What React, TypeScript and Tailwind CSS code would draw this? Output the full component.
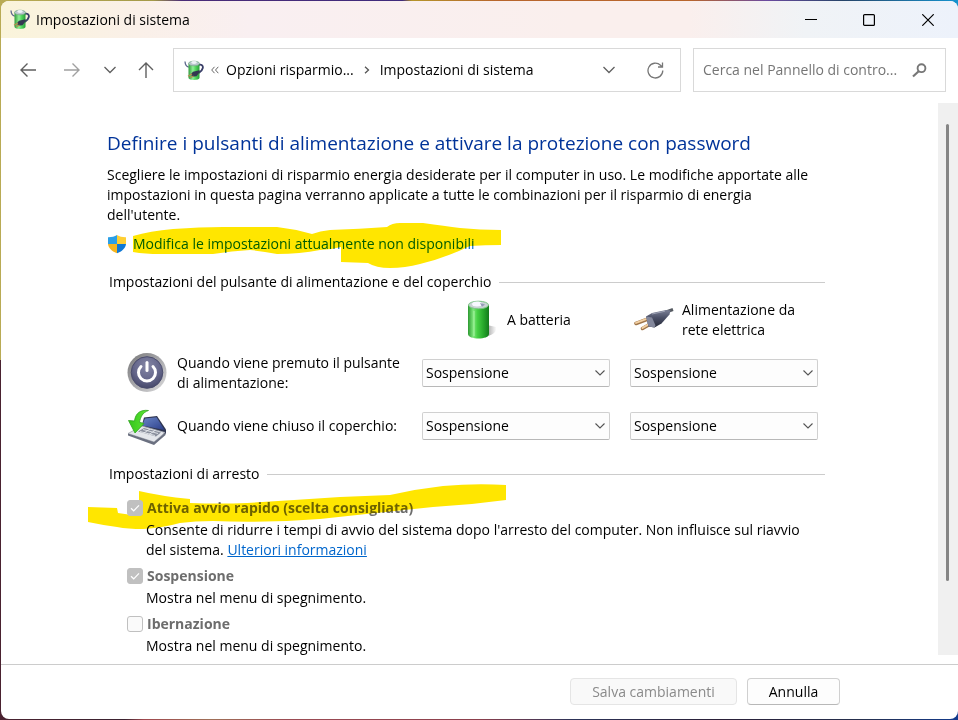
import { useState } from "react";
import type { ReactNode } from "react";

function PowerOptionsIcon() {
  return (
    <svg width="20" height="21" viewBox="0 0 20 21" aria-hidden="true" className="shrink-0">
      <defs>
        <linearGradient id="canBody" x1="0" x2="1" y1="0" y2="0">
          <stop offset="0" stopColor="#2f9c3c" />
          <stop offset="0.4" stopColor="#8fee94" />
          <stop offset="0.65" stopColor="#4fd65a" />
          <stop offset="1" stopColor="#2a9a39" />
        </linearGradient>
      </defs>
      <path d="M1 1.500c.2 3.400 1.400 5.200 3.800 5.600" fill="none" stroke="#5b668c" strokeWidth="1.300" />
      <path d="M14.500 5c3-1 4.800.4 4.300 3-.4 2-1.600 3.400-4 5" fill="none" stroke="#3a3f68" strokeWidth="1.800" />
      <path d="M4.500 3.500v14.500c0 2.600 11 2.600 11 0V3.500z" fill="url(#canBody)" />
      <ellipse cx="10" cy="3.500" rx="5.500" ry="2.300" fill="#b9c6cc" stroke="#73a884" strokeWidth=".7" />
      <ellipse cx="10" cy="2.500" rx="2.800" ry="1.400" fill="#eef2f6" />
      <path d="M7 14l2-2.200 6.500-1.600.3 1.800-3.300 4.200-4.500.5z" fill="#333750" />
      <path d="M8 14l-4 2.200M9.500 16l-3.300 1.800" stroke="#b58a4e" strokeWidth="1.300" />
    </svg>
  );
}

function ShieldIcon() {
  return (
    <svg width="20" height="20" viewBox="0 0 20 20" aria-hidden="true" className="shrink-0">
      <path d="M10 1C7.500 2.600 4.200 3.300 1 3.200V10h9z" fill="#2b9fe6" />
      <path d="M10 1c2.500 1.600 5.800 2.300 9 2.200V10h-9z" fill="#ffcf33" />
      <path d="M1 10c.4 4.300 4.200 7.500 9 9.200V10z" fill="#f6b51e" />
      <path d="M19 10c-.4 4.300-4.200 7.500-9 9.200V10z" fill="#0f78d4" />
    </svg>
  );
}

function BatteryIcon() {
  return (
    <svg width="40" height="40" viewBox="0 0 40 40" aria-hidden="true" className="shrink-0">
      <defs>
        <linearGradient id="cell" x1="0" x2="1" y1="0" y2="0">
          <stop offset="0" stopColor="#2c9a31" />
          <stop offset="0.250" stopColor="#7fe77c" />
          <stop offset="0.450" stopColor="#45cf43" />
          <stop offset="0.750" stopColor="#25a52a" />
          <stop offset="1" stopColor="#137a1c" />
        </linearGradient>
        <linearGradient id="cellShade" x1="0" x2="1" y1="0" y2="0">
          <stop offset="0" stopColor="#8a8a8a" />
          <stop offset="1" stopColor="#ffffff" />
        </linearGradient>
      </defs>
      <path d="M25 25l9 2c2 4-4 9-12 10z" fill="url(#cellShade)" />
      <path d="M6 5v29c0 6 21 6 21 0V5z" fill="url(#cell)" />
      <ellipse cx="16.500" cy="5" rx="10" ry="3.800" fill="#c9d3d4" stroke="#7cc585" />
      <ellipse cx="15" cy="4" rx="5" ry="2.500" fill="#f8f8ff" />
      <path d="M18 3l5 1.500-3 2.300z" fill="#9499b8" />
      <path d="M12 11v25" stroke="#b1f7ab" strokeWidth="1.500" opacity=".6" />
    </svg>
  );
}

function PlugIcon() {
  return (
    <svg width="40" height="40" viewBox="0 0 40 40" aria-hidden="true" className="shrink-0">
      <defs>
        <linearGradient id="plug" x1="0" x2="0" y1="0" y2="1">
          <stop offset="0" stopColor="#7b8096" />
          <stop offset="0.450" stopColor="#4a4f66" />
          <stop offset="1" stopColor="#272a38" />
        </linearGradient>
      </defs>
      <path d="M14 19L2 23.500M18 23L8.500 28.500" stroke="#a0764a" strokeWidth="3.500" strokeLinecap="round" />
      <path d="M14 18.400L2 22.900M18 22.400L8.500 27.900" stroke="#f3d0a2" strokeWidth="1.900" strokeLinecap="round" />
      <path d="M32 12l7-2.500" stroke="#555a61" strokeWidth="3" />
      <path d="M12 16.500l6-3.500 14-3 4.500.5-1 4-8 9-7 4-6-1z" fill="url(#plug)" />
      <path d="M12 16.500l6 1 3.500 8-1 2-6-1z" fill="#83879b" />
      <path d="M18 14l13-2.800" stroke="#9da1b3" strokeWidth="1" />
    </svg>
  );
}

function PowerButtonIcon() {
  return (
    <svg width="40" height="40" viewBox="0 0 40 40" aria-hidden="true">
      <defs>
        <linearGradient id="rim" x1="0" x2="1" y1="0" y2="1">
          <stop offset="0" stopColor="#777777" />
          <stop offset="0.500" stopColor="#a8a8ac" />
          <stop offset="1" stopColor="#dddddd" />
        </linearGradient>
        <radialGradient id="face" cx=".5" cy=".3" r=".75">
          <stop offset="0" stopColor="#8587a6" />
          <stop offset="0.550" stopColor="#65678b" />
          <stop offset="1" stopColor="#414365" />
        </radialGradient>
      </defs>
      <circle cx="20" cy="19.500" r="19.500" fill="url(#rim)" />
      <circle cx="20" cy="19.500" r="15.800" fill="url(#face)" stroke="#4a4c6c" />
      <path d="M14 13.500a8.500 8.500 0 1 0 12 0" fill="none" stroke="#ffffff" strokeWidth="3" strokeLinecap="round" />
      <path d="M20 9.500v8" stroke="#ffffff" strokeWidth="3" strokeLinecap="round" />
    </svg>
  );
}

function LidIcon() {
  return (
    <svg width="40" height="40" viewBox="0 0 40 40" aria-hidden="true">
      <defs>
        <linearGradient id="screen" x1="0" x2="1" y1="0" y2="1">
          <stop offset="0" stopColor="#6a86c8" />
          <stop offset="1" stopColor="#2b3d88" />
        </linearGradient>
        <linearGradient id="arrow" x1="0" x2="1" y1="0" y2="0">
          <stop offset="0" stopColor="#35c51c" />
          <stop offset="1" stopColor="#5fe735" />
        </linearGradient>
      </defs>
      <path d="M17 11.500l13-1.500 9 13.500v4l-3 1-22-6z" fill="#2f3550" />
      <path d="M18 12.500l11.500-1.300 8 12.800L15 19.500z" fill="url(#screen)" />
      <path d="M1 27.500l14-7.500 23 6.500-11 9.500z" fill="#e4e6eb" stroke="#a5a9b2" strokeWidth=".8" />
      <path d="M1 27.500l26 8.500v3L1 29.500zM27 36l11.500-9.500v2.500L27 39z" fill="#6b7080" />
      <path d="M11 25.500l6-3.500 17 4.500-5 4z" fill="#8a8f9d" />
      <path d="M13 25.500l15 4M16 23.500l15 4M17 27l6-4M22 28.500l6-4" stroke="#eef0f4" strokeWidth=".8" />
      <path d="M21.500 4.500C13.500 3.500 8.500 7 7.500 15L1.500 14.500 8 27l9-9.500-4.500-1.200C13.500 11 15.500 6.500 21.500 4.500z" fill="url(#arrow)" stroke="#2fa31f" strokeWidth=".8" />
    </svg>
  );
}

function Chevron({ className }: { className: string }) {
  return (
    <svg width="12" height="12" viewBox="0 0 12 12" aria-hidden="true" className={className}>
      <path d="M.5 3L6 8.500 11.500 3" fill="none" stroke="currentColor" strokeWidth="1.300" />
    </svg>
  );
}

function Dropdown({ label }: { label: string }) {
  return (
    <div className="relative w-[188px]">
      <select
        aria-label={label}
        className="block h-7 w-full appearance-none rounded-[2px] border border-[#d0d0d0] border-b-[#b8b8b8] bg-[#fdfdfd] pl-[3px] text-black"
      >
        <option>Sospensione</option>
        <option>Iberna</option>
        <option>Nessuna operazione</option>
      </select>
      <svg width="10" height="6" viewBox="0 0 10 6" aria-hidden="true" className="pointer-events-none absolute right-[5px] top-[11px]">
        <path d="M.5.5L5 5 9.500.5" fill="none" stroke="#555555" strokeWidth="1.100" />
      </svg>
    </div>
  );
}

function GroupTitle({ children }: { children: ReactNode }) {
  return (
    <div className="flex items-center gap-2 pl-0.5">
      <h2>{children}</h2>
      <div className="mr-0.5 h-px flex-1 bg-[#cccccc]" />
    </div>
  );
}

function ShutdownOption({
  id,
  label,
  initial,
  highlight,
  children,
}: {
  id: string;
  label: string;
  initial: boolean;
  highlight?: ReactNode;
  children: ReactNode;
}) {
  const [checked] = useState(initial);
  return (
    <div className="mb-1.5 pl-5">
      <div className="relative flex h-5 items-center gap-1">
        <span className="relative z-10 grid size-4 shrink-0 place-items-center">
          <input
            id={id}
            type="checkbox"
            disabled
            checked={checked}
            readOnly
            className="col-start-1 row-start-1 size-4 appearance-none rounded-[3px] border border-[#c0c0c0] bg-[#fafafa] checked:bg-[#c0c0c0]"
          />
          {checked && (
            <svg width="10" height="10" viewBox="0 0 10 10" aria-hidden="true" className="pointer-events-none relative col-start-1 row-start-1">
              <path d="M1 5.200l2.700 2.600L9 2.300" fill="none" stroke="#ffffff" strokeWidth="1.200" />
            </svg>
          )}
        </span>
        <label htmlFor={id} className="font-bold text-[#6d6d6d]">
          {label}
        </label>
        {highlight}
      </div>
      <p className="mt-0.5 max-w-[696px] pl-[19px]">{children}</p>
    </div>
  );
}

export default function App() {
  return (
    <div className="h-screen bg-[linear-gradient(90deg,#b9ab55_0%,#a49a48_16%,#4a2c78_19%,#3f2a7c_42%,#b5942a_43%,#b8652c_52%,#b8652c_72%,#6b4ba0_80%,#264468_88%,#1593cf_100%),linear-gradient(90deg,#4a2230_0%,#3b2230_13%,#a0484e_15%,#a07058_22%,#9c4c54_30%,#8c3f4c_50%,#2c3358_60%,#2b2038_75%,#26304e_90%,#123a8c_100%)] bg-[length:100%_50%,100%_50%] bg-[position:top,bottom] bg-no-repeat p-px pr-0 font-['Open_Sans','Noto_Sans',sans-serif] text-[14px] leading-5 text-black">
      <div className="flex h-full flex-col overflow-hidden rounded-lg bg-white">
        <header className="flex h-[37px] shrink-0 items-center bg-[linear-gradient(90deg,#faf4da_0%,#faf0e8_14%,#f9eff1_26%,#faefed_60%,#faefed_72%,#f0f3f6_84%,#edf2fb_100%)] pl-[9px]">
          <PowerOptionsIcon />
          <h1 className="ml-1.5 flex-1">Impostazioni di sistema</h1>
          <button aria-label="Riduci a icona" className="grid h-full w-[58px] place-items-center">
            <svg width="12" height="12" viewBox="0 0 12 12"><path d="M0 5.500h12" stroke="#000" /></svg>
          </button>
          <button aria-label="Ingrandisci" className="grid h-full w-[58px] place-items-center">
            <svg width="12" height="12" viewBox="0 0 12 12"><rect x=".6" y=".6" width="10.800" height="10.800" rx="1" fill="none" stroke="#000" strokeWidth="1.200" /></svg>
          </button>
          <button aria-label="Chiudi" className="grid h-full w-[60px] place-items-center">
            <svg width="12" height="12" viewBox="0 0 12 12"><path d="M.3.3l11.400 11.400M11.700.3L.3 11.700" stroke="#000" strokeWidth="1.200" /></svg>
          </button>
        </header>

        <nav className="flex shrink-0 items-center pb-[11px] pl-[18px] pr-3 pt-2.5">
          <button aria-label="Indietro" className="mr-[26px] text-[#5f5f5f]">
            <svg width="18" height="16" viewBox="0 0 18 16" fill="none" stroke="currentColor" strokeWidth="1.400"><path d="M17 8H2M8.500 1.500L2 8l6.500 6.500" /></svg>
          </button>
          <button aria-label="Avanti" className="mr-[23px] text-[#a0a0a0]">
            <svg width="18" height="16" viewBox="0 0 18 16" fill="none" stroke="currentColor" strokeWidth="1.400"><path d="M1 8h15M9.500 1.500L16 8l-6.500 6.500" /></svg>
          </button>
          <button aria-label="Percorsi recenti" className="mr-[22px] text-[#5f5f5f]">
            <Chevron className="" />
          </button>
          <button aria-label="Livello superiore" className="mr-[19px] text-[#5f5f5f]">
            <svg width="16" height="18" viewBox="0 0 16 18" fill="none" stroke="currentColor" strokeWidth="1.400"><path d="M8 17V2M1 9l7-7 7 7" /></svg>
          </button>
          <div className="flex h-11 flex-1 items-center border border-[#d9d9d9] pl-2.5">
            <PowerOptionsIcon />
            <svg width="8" height="8" viewBox="0 0 8 8" fill="none" stroke="#666666" aria-hidden="true" className="mx-[7px]"><path d="M3.500.8L.7 4l2.800 3.200M7.300.8L4.500 4l2.800 3.200" /></svg>
            <a href="#opzioni" className="whitespace-nowrap">Opzioni risparmio...</a>
            <svg width="6" height="8" viewBox="0 0 6 8" fill="none" stroke="#555555" strokeWidth="1.300" aria-hidden="true" className="mx-2.5"><path d="M1 .7L4.500 4 1 7.300" /></svg>
            <a href="#sistema" className="whitespace-nowrap">Impostazioni di sistema</a>
            <button aria-label="Mostra percorsi" className="ml-auto mr-8 text-[#606060]"><Chevron className="" /></button>
            <button aria-label="Aggiorna" className="mr-4 text-[#777777]">
              <svg width="17" height="17" viewBox="0 0 17 17" fill="none" stroke="currentColor" strokeWidth="1.300"><path d="M15.800 8.500a7.400 7.400 0 1 1-2.300-5.300L15.300 5M15.500.5V5H11" /></svg>
            </button>
          </div>
          <label className="ml-3 flex h-11 w-[253px] items-center border border-[#d9d9d9] pl-[9px] pr-[18px]">
            <input
              aria-label="Cerca nel Pannello di controllo"
              placeholder="Cerca nel Pannello di contro..."
              className="min-w-0 flex-1 outline-none placeholder:text-[#757575]"
            />
            <svg width="15" height="15" viewBox="0 0 15 15" fill="none" stroke="#777777" aria-hidden="true"><circle cx="9.500" cy="5.200" r="3.900" strokeWidth="1.900" /><path d="M6.700 8.200L1 13.500" strokeWidth="2.200" /></svg>
          </label>
        </nav>

        <div className="flex min-h-0 flex-1">
          <main className="min-w-0 flex-1 overflow-hidden pl-[106px] pr-[111px] pt-7">
            <h2 className="whitespace-nowrap text-[19px] leading-6 text-[#003399]">
              Definire i pulsanti di alimentazione e attivare la protezione con password
            </h2>
            <p className="mt-2.5 max-w-[740px]">
              Scegliere le impostazioni di risparmio energia desiderate per il computer in uso. Le modifiche apportate alle
              impostazioni in questa pagina verranno applicate a tutte le combinazioni per il risparmio di energia dell'utente.
            </p>
            <div className="relative mt-2 flex h-[22px] items-center gap-1.5">
              <ShieldIcon />
              <a href="#modifica" className="text-[#0066cc]">Modifica le impostazioni attualmente non disponibili</a>
              <svg width="370" height="48" viewBox="133 222 370 48" aria-hidden="true" className="pointer-events-none absolute -top-[11px] left-[26px] mix-blend-multiply">
                <path
                  d="M133 236Q150 231 173 229Q200 227 223 227H277Q295 229 312 234Q320 231 330 230Q360 229 387 227Q392 223 400 223H423Q445 226 460 228Q480 230 501 230V245Q485 245 470 246Q445 258 420 264Q405 268 390 268Q376 268 368 263L341 262V247Q330 250 320 250Q300 254 277 254Q262 251 250 250Q232 251 213 254H160Q145 254 133 252Z"
                  fill="#ffe600"
                />
              </svg>
            </div>

            <section className="mt-[17px]">
              <GroupTitle>Impostazioni del pulsante di alimentazione e del coperchio</GroupTitle>
              <div className="mt-2 grid grid-cols-[50px_245px_208px_188px] items-center gap-y-[13px] pl-5">
                <div className="col-start-3 flex h-10 items-center gap-[5px] pl-10">
                  <BatteryIcon />
                  A batteria
                </div>
                <div className="flex h-10 items-center gap-2 pl-1">
                  <PlugIcon />
                  <span>Alimentazione da<br />rete elettrica</span>
                </div>
                <PowerButtonIcon />
                <span>Quando viene premuto il pulsante<br />di alimentazione:</span>
                <Dropdown label="Pulsante di alimentazione, a batteria" />
                <Dropdown label="Pulsante di alimentazione, rete elettrica" />
                <LidIcon />
                <span>Quando viene chiuso il coperchio:</span>
                <Dropdown label="Chiusura coperchio, a batteria" />
                <Dropdown label="Chiusura coperchio, rete elettrica" />
              </div>
            </section>

            <section className="mt-[18px]">
              <GroupTitle>Impostazioni di arresto</GroupTitle>
              <div className="mt-3.5">
                <ShutdownOption
                  id="avvio-rapido"
                  label="Attiva avvio rapido (scelta consigliata)"
                  initial={true}
                  highlight={
                    <svg width="420" height="46" viewBox="88 484 420 46" aria-hidden="true" className="pointer-events-none absolute -left-[39px] -top-[14px] mix-blend-multiply">
                      <path
                        d="M88 507L117 508L118 513Q128 515 139 515V491Q160 496 190 499V503Q220 504 247 503Q295 500 340 497L390 495Q416 489 443 486Q475 483 506 485V500Q470 505 433 507Q375 513 320 519Q265 523 213 521Q195 521 180 523Q162 528 143 529Q128 529 117 527Q102 525 88 522Z"
                        fill="#ffe600"
                      />
                    </svg>
                  }
                >
                  Consente di ridurre i tempi di avvio del sistema dopo l'arresto del computer. Non influisce sul riavvio
                  del sistema. <a href="#info" className="text-[#0066cc] underline">Ulteriori informazioni</a>
                </ShutdownOption>
                <ShutdownOption id="sospensione" label="Sospensione" initial={true}>
                  Mostra nel menu di spegnimento.
                </ShutdownOption>
                <ShutdownOption id="ibernazione" label="Ibernazione" initial={false}>
                  Mostra nel menu di spegnimento.
                </ShutdownOption>
              </div>
            </section>
          </main>
          <div className="mb-[9px] w-5 shrink-0 bg-[#f0f0f0] pl-2 pt-[21px]">
            <div className="h-[86%] w-[3px] rounded-full bg-[#858585]" />
          </div>
        </div>

        <footer className="flex shrink-0 justify-end gap-2.5 border-t border-[#cccccc] pb-3.5 pr-[118px] pt-[13px]">
          <button disabled className="h-[27px] w-[167px] rounded-[4px] border border-[#e5e5e5] bg-[#f9f9f9] text-[#8a8a8a]">
            Salva cambiamenti
          </button>
          <button className="h-[27px] w-[93px] rounded-[4px] border border-[#d0d0d0] border-b-[#b8b8b8] bg-[#fdfdfd]">
            Annulla
          </button>
        </footer>
      </div>
    </div>
  );
}
